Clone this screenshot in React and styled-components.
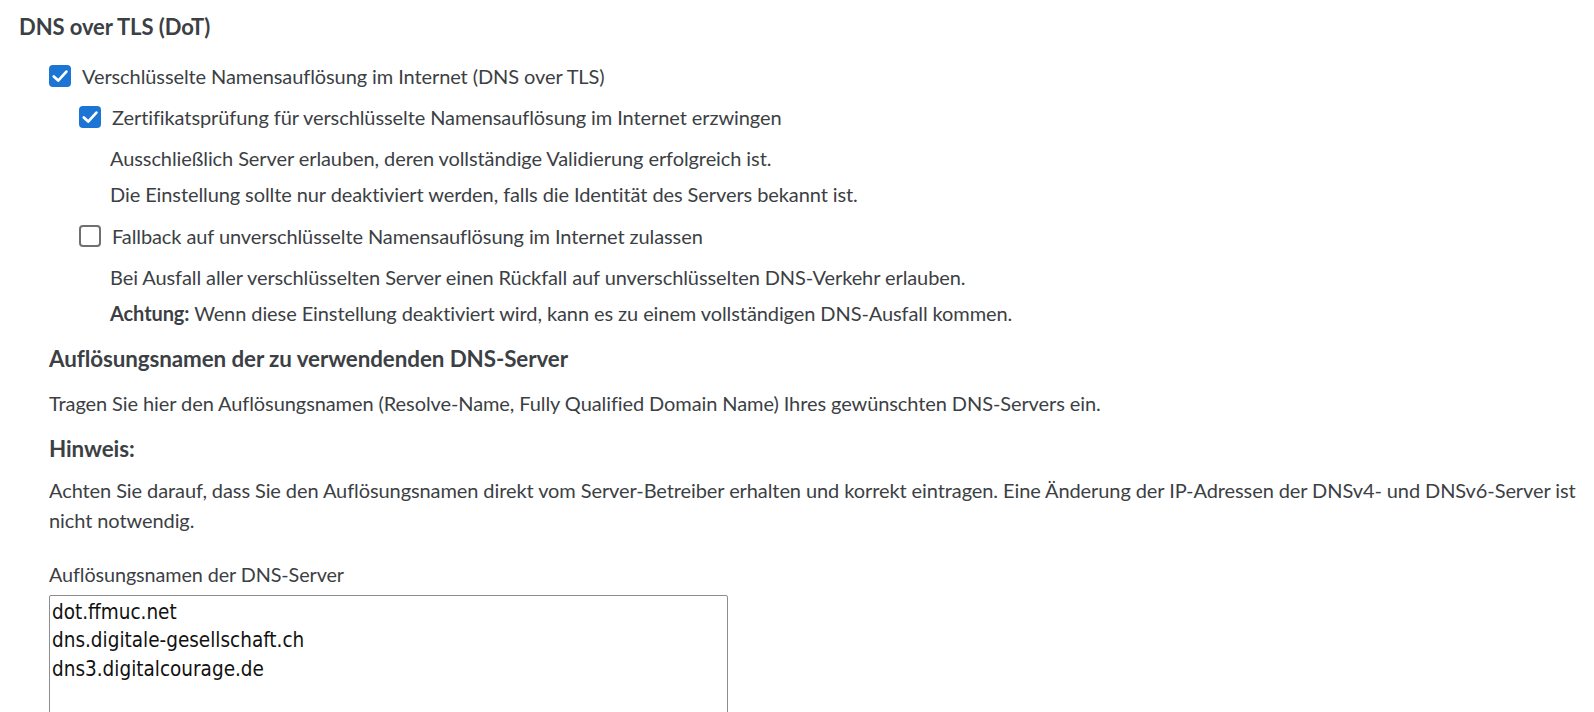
import React from "react";
import styled, { createGlobalStyle } from "styled-components";

const GlobalStyle = createGlobalStyle`
  html, body {
    margin: 0;
    padding: 0;
    background: #ffffff;
  }
  body {
    font-family: "Lato", "Open Sans", "Liberation Sans", sans-serif;
    color: #3c3f44;
    letter-spacing: -0.09px;
  }
`;

const Page = styled.div`
  padding: 12px 0 0 19px;
  box-sizing: border-box;
  width: 1594px;
`;

const Title = styled.h2`
  margin: 0 0 19px;
  font-size: 22px;
  line-height: 30px;
  font-weight: 700;
`;

const Options = styled.div`
  padding-left: ${(p) => p.indent || 0}px;
`;

const CheckRow = styled.label`
  display: flex;
  align-items: center;
  gap: 11px;
  height: 30px;
  margin-bottom: ${(p) => (p.mb != null ? p.mb : 11)}px;
  font-size: 20px;
  line-height: 30px;
  cursor: pointer;
`;

const Box = styled.span`
  flex: none;
  width: 22px;
  height: 22px;
  box-sizing: border-box;
  border-radius: 4px;
  display: inline-flex;
  align-items: center;
  justify-content: center;
  background: ${(p) => (p.checked ? "#1c74d4" : "#ffffff")};
  border: ${(p) => (p.checked ? "none" : "2px solid #707070")};
`;

const Hint = styled.div`
  padding-left: 31px;
  margin: 11px 0 12px;
`;

const HintLine = styled.p`
  margin: 0 0 6px;
  font-size: 20px;
  line-height: 30px;
  &:last-child {
    margin-bottom: 0;
  }
  & strong {
    font-weight: 700;
  }
`;

const Block = styled.div`
  padding-left: 30px;
`;

const SubHeading = styled.h3`
  margin: ${(p) => p.mt || 0}px 0 ${(p) => p.mb || 14}px;
  font-size: 22.4px;
  line-height: 30px;
  font-weight: 700;
`;

const Text = styled.p`
  margin: 0 0 ${(p) => p.mb || 14}px;
  font-size: 20px;
  line-height: 30.5px;
`;

const FieldLabel = styled.label`
  display: block;
  font-size: 19.8px;
  line-height: 27px;
  margin: 25px 0 7px;
`;

const Area = styled.textarea`
  display: block;
  width: 679px;
  height: 140px;
  box-sizing: border-box;
  border: 1px solid #8d8d8d;
  border-radius: 2px;
  padding: 2px 2px;
  margin: 0;
  resize: none;
  font-family: "Liberation Sans Narrow", "DejaVu Sans Condensed", "Roboto", sans-serif;
  font-size: 20.5px;
  line-height: 28.5px;
  letter-spacing: 0;
  color: #111;
  outline: none;
`;

const Check = ({ checked }) => (
  <Box checked={checked}>
    {checked && (
      <svg width="22" height="22" viewBox="0 0 22 22">
        <path
          d="M4.8 11.4 L9.2 15.6 L17.4 6.6"
          fill="none"
          stroke="#fff"
          strokeWidth="2.7"
          strokeLinecap="round"
          strokeLinejoin="round"
        />
      </svg>
    )}
  </Box>
);

export default function App() {
  return (
    <>
      <GlobalStyle />
      <Page>
        <Title>DNS over TLS (DoT)</Title>
        <Options indent={30}>
          <CheckRow>
            <Check checked />
            Verschlüsselte Namensauflösung im Internet (DNS over TLS)
          </CheckRow>
          <Options indent={30}>
            <CheckRow mb={0}>
              <Check checked />
              Zertifikatsprüfung für verschlüsselte Namensauflösung im Internet erzwingen
            </CheckRow>
            <Hint>
              <HintLine>
                Ausschließlich Server erlauben, deren vollständige Validierung erfolgreich ist.
              </HintLine>
              <HintLine>
                Die Einstellung sollte nur deaktiviert werden, falls die Identität des Servers bekannt ist.
              </HintLine>
            </Hint>
            <CheckRow mb={0}>
              <Check />
              Fallback auf unverschlüsselte Namensauflösung im Internet zulassen
            </CheckRow>
            <Hint>
              <HintLine>
                Bei Ausfall aller verschlüsselten Server einen Rückfall auf unverschlüsselten DNS-Verkehr erlauben.
              </HintLine>
              <HintLine>
                <strong>Achtung:</strong> Wenn diese Einstellung deaktiviert wird, kann es zu einem vollständigen DNS-Ausfall kommen.
              </HintLine>
            </Hint>
          </Options>
        </Options>
        <Block>
          <SubHeading mt={16} mb={14}>
            Auflösungsnamen der zu verwendenden DNS-Server
          </SubHeading>
          <Text mb={15}>
            Tragen Sie hier den Auflösungsnamen (Resolve-Name, Fully Qualified Domain Name) Ihres gewünschten DNS-Servers ein.
          </Text>
          <SubHeading mb={11}>Hinweis:</SubHeading>
          <Text mb={14}>
            Achten Sie darauf, dass Sie den Auflösungsnamen direkt vom Server-Betreiber erhalten und korrekt eintragen. Eine Änderung der IP-Adressen der DNSv4- und DNSv6-Server ist nicht notwendig.
          </Text>
          <FieldLabel htmlFor="dns-names">Auflösungsnamen der DNS-Server</FieldLabel>
          <Area
            id="dns-names"
            defaultValue={"dot.ffmuc.net\ndns.digitale-gesellschaft.ch\ndns3.digitalcourage.de"}
          />
        </Block>
      </Page>
    </>
  );
}
